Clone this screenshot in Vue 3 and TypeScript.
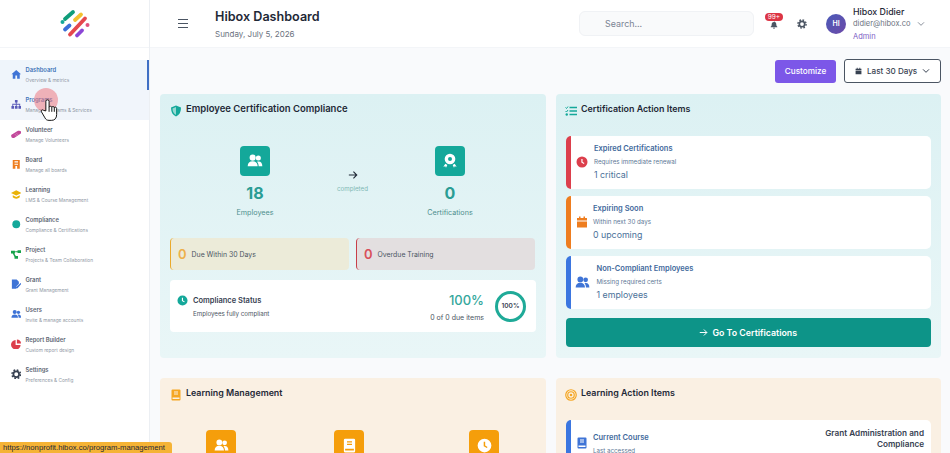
<script setup lang="ts">
interface NavItem {
  title: string
  sub: string
  icon: string
  tone: string
}

const navItems: NavItem[] = [
  { title: 'Dashboard', sub: 'Overview & metrics', icon: 'home', tone: 'blue' },
  { title: 'Programs', sub: 'Manage Programs & Services', icon: 'sitemap', tone: 'indigo' },
  { title: 'Volunteer', sub: 'Manage Volunteers', icon: 'hands', tone: 'pink' },
  { title: 'Board', sub: 'Manage all boards', icon: 'board', tone: 'orange' },
  { title: 'Learning', sub: 'LMS & Course Management', icon: 'cap', tone: 'yellow' },
  { title: 'Compliance', sub: 'Compliance & Certifications', icon: 'dot', tone: 'teal' },
  { title: 'Project', sub: 'Projects & Team Collaboration', icon: 'diagram', tone: 'green' },
  { title: 'Grant', sub: 'Grant Management', icon: 'file', tone: 'blue' },
  { title: 'Users', sub: 'Invite & manage accounts', icon: 'users', tone: 'blue' },
  { title: 'Report Builder', sub: 'Custom report design', icon: 'pie', tone: 'red' },
  { title: 'Settings', sub: 'Preferences & Config', icon: 'gear', tone: 'dark' }
]

const actionItems = [
  { title: 'Expired Certifications', sub: 'Requires immediate renewal', value: '1 critical', icon: 'clock', tone: 'red', gap: 'wide' },
  { title: 'Expiring Soon', sub: 'Within next 30 days', value: '0 upcoming', icon: 'calendar', tone: 'orange', gap: 'mid' },
  { title: 'Non-Compliant Employees', sub: 'Missing required certs', value: '1 employees', icon: 'users', tone: 'blue', gap: 'xwide' }
]
</script>

<template>
  <svg class="defs" xmlns="http://www.w3.org/2000/svg">
    <symbol id="home" viewBox="0 0 24 24"><path fill="currentColor" d="M12 2 1 12h3v10h6v-7h4v7h6V12h3z" /></symbol>
    <symbol id="sitemap" viewBox="0 0 24 24"><path fill="currentColor" d="M9 2h6v6h-2v3h8v5h2v6h-6v-6h2v-3h-6v3h2v6H9v-6h2v-3H5v3h2v6H1v-6h2v-5h8V8H9z" /></symbol>
    <symbol id="hands" viewBox="0 0 24 24"><path fill="currentColor" d="M1 13 14 5c4-2 8-1 9 1s0 5-3 6L8 20c-3 1-6 0-7-2s-1-4 0-5z" /><path fill="none" stroke="#fff" stroke-width="1.200" opacity=".5" d="m8 11 5 5M12 9l5 5" /></symbol>
    <symbol id="board" viewBox="0 0 24 24"><path fill="currentColor" fill-rule="evenodd" d="M4 2h16v20h-6v-6h-4v6H4zm4 3v3h8V5zm0 6v2h8v-2z" /></symbol>
    <symbol id="cap" viewBox="0 0 24 24"><path fill="currentColor" d="M12 3 0 9l12 6 12-6zM4 14v5c2 2 5 3 8 3s6-1 8-3v-5l-8 4z" /></symbol>
    <symbol id="dot" viewBox="0 0 24 24"><circle cx="12" cy="12" r="9" fill="currentColor" /></symbol>
    <symbol id="diagram" viewBox="0 0 24 24"><path fill="currentColor" d="M0 4h9v6H7.500l3.500 6h5v6h-8v-4L4 10H0zm15-1h9v6h-9V7.500H9.500v-2.500H15z" /></symbol>
    <symbol id="file" viewBox="0 0 24 24"><path fill="currentColor" d="M2 1h11l5 5v5l-6 6v5H2zM22 9l2 2-9 10h-3v-3z" /></symbol>
    <symbol id="users" viewBox="0 0 24 24"><circle cx="8.500" cy="7" r="4.600" fill="currentColor" /><circle cx="17" cy="7.600" r="3.800" fill="currentColor" /><path fill="currentColor" d="M1 20c0-5 3-7.500 7.500-7.500S16 15 16 20zM17.500 20c0-3-.8-5.300-2.400-7 .7-.3 1.500-.4 2.400-.4 3.500 0 5.500 2.400 5.500 7.400z" /></symbol>
    <symbol id="pie" viewBox="0 0 24 24"><path fill="currentColor" d="M10.500 2v11.500H22A11 11 0 1 1 10.500 2zM13.500 1a10 10 0 0 1 9.500 9.500h-9.500z" /></symbol>
    <symbol id="gear" viewBox="0 0 24 24"><circle cx="12" cy="12" r="6.500" fill="none" stroke="currentColor" stroke-width="4" /><circle cx="12" cy="12" r="9.800" fill="none" stroke="currentColor" stroke-width="3.400" stroke-dasharray="4 3.700" /></symbol>
    <symbol id="bell" viewBox="0 0 24 24"><path fill="currentColor" d="M12 1a2 2 0 0 1 2 2c4 1 5 4 5 8 0 3 1 5 3 6v2H2v-2c2-1 3-3 3-6 0-4 1-7 7-8a2 2 0 0 1 0-2zM9 20h6a3 3 0 0 1-6 0z" /></symbol>
    <symbol id="clock" viewBox="0 0 24 24"><path fill="currentColor" fill-rule="evenodd" d="M12 1a11 11 0 1 1 0 22 11 11 0 0 1 0-22zm-1.300 5v7l5 3 1.200-1.800-3.800-2.300V6z" /></symbol>
    <symbol id="calendar" viewBox="0 0 24 24"><path fill="currentColor" d="M6 1h3v3h6V1h3v3h4v5H2V4h4zM2 11h20v12H2z" /></symbol>
    <symbol id="shield" viewBox="0 0 24 24"><path fill="currentColor" d="M12 1 22 5c0 9-3 15-10 18C5 20 2 14 2 5z" /><path fill="#fff" opacity=".55" d="M12 4v16c-5-3-7-7-7-13z" /></symbol>
    <symbol id="tasks" viewBox="0 0 24 24"><path fill="none" stroke="currentColor" stroke-width="3" d="M9 5h15M9 12h15M9 19h15" /><path fill="none" stroke="currentColor" stroke-width="2" d="m1 5 2 2 3-4M1 12l2 2 3-4" /><circle cx="3.500" cy="19" r="2.400" fill="currentColor" /></symbol>
    <symbol id="award" viewBox="0 0 24 24"><path fill="currentColor" fill-rule="evenodd" d="M12 1a8 8 0 1 1 0 16 8 8 0 0 1 0-16zm0 5a3 3 0 1 0 0 6 3 3 0 0 0 0-6zM5 16l3 2-2 4-1-2-3 .5zM19 16l-3 2 2 4 1-2 3 .5z" /></symbol>
    <symbol id="book" viewBox="0 0 24 24"><path fill="currentColor" fill-rule="evenodd" d="M5 1h14a2 2 0 0 1 2 2v18a2 2 0 0 1-2 2H5a2 2 0 0 1-2-2V3a2 2 0 0 1 2-2zm3 4v2h8V5zm0 4v2h8V9zM5 17v3h14v-3z" /></symbol>
    <symbol id="target" viewBox="0 0 24 24"><circle cx="12" cy="12" r="10.500" fill="none" stroke="currentColor" stroke-width="2.400" /><circle cx="12" cy="12" r="6.500" fill="none" stroke="currentColor" stroke-width="2.400" /><circle cx="12" cy="12" r="2.600" fill="currentColor" /></symbol>
  </svg>

  <div class="app">
    <aside class="sidebar">
      <div class="logo">
        <svg width="32" height="32" viewBox="0 0 32 32">
          <g fill="none" stroke-linecap="round" stroke-width="3.800">
            <path stroke="#0f9d7a" d="M6 11 14 4" />
            <path stroke="#f2c230" d="M16 12 22 6.500" />
            <path stroke="#3b6fd8" d="M6 21.500 10.500 17.500" />
            <path stroke="#e5484d" d="M11 26.500 26 10.500" />
            <path stroke="#8b46d6" d="M18 27.500 23 22.500" />
          </g>
          <circle cx="3.500" cy="14" r="2" fill="#14a89a" />
          <circle cx="28.500" cy="17" r="2" fill="#e0527e" />
        </svg>
      </div>
      <nav class="nav">
        <a
          v-for="(item, i) in navItems"
          :key="item.title"
          class="nav-item"
          :class="{ active: i === 0, hovered: i === 1 }"
        >
          <svg class="nav-icon" :class="item.tone"><use :href="`#${item.icon}`" /></svg>
          <span class="nav-text">
            <span class="nav-title">{{ item.title }}</span>
            <span class="nav-sub">{{ item.sub }}</span>
          </span>
        </a>
      </nav>
    </aside>

    <div class="main">
      <header class="topbar">
        <button class="burger" aria-label="Menu"><i></i><i></i><i></i></button>
        <div class="heading">
          <h1>Hibox Dashboard</h1>
          <p>Sunday, July 5, 2026</p>
        </div>
        <div class="search">Search...</div>
        <div class="bell">
          <svg class="bell-icon"><use href="#bell" /></svg>
          <span class="badge">99+</span>
        </div>
        <svg class="top-gear"><use href="#gear" /></svg>
        <div class="avatar">HI</div>
        <div class="user">
          <strong>Hibox Didier</strong>
          <span>didier@hibox.co</span>
          <em>Admin</em>
        </div>
        <svg class="user-caret" viewBox="0 0 12 8"><path d="M1.500 1.500 6 6l4.500-4.500" /></svg>
      </header>

      <div class="content">
        <div class="toolbar">
          <button class="customize">Customize</button>
          <button class="range">
            <svg class="range-cal"><use href="#calendar" /></svg>
            <span>Last 30 Days</span>
            <svg class="range-caret" viewBox="0 0 12 8"><path d="M1.500 1.500 6 6l4.500-4.500" /></svg>
          </button>
        </div>

        <div class="grid">
          <section class="panel teal-panel">
            <h2 class="panel-title"><svg class="title-icon teal"><use href="#shield" /></svg>Employee Certification Compliance</h2>
            <div class="flow">
              <div class="flow-col">
                <div class="tile teal-bg"><svg><use href="#users" /></svg></div>
                <div class="flow-num">18</div>
                <div class="flow-label">Employees</div>
              </div>
              <div class="flow-mid">
                <svg class="flow-arrow" viewBox="0 0 12 12"><path d="M1 6h9.500M6.500 2l4 4-4 4" /></svg>
                <span>completed</span>
              </div>
              <div class="flow-col">
                <div class="tile teal-bg"><svg><use href="#award" /></svg></div>
                <div class="flow-num">0</div>
                <div class="flow-label">Certifications</div>
              </div>
            </div>
            <div class="stats">
              <div class="stat warn"><b>0</b><span>Due Within 30 Days</span></div>
              <div class="stat danger"><b>0</b><span>Overdue Training</span></div>
            </div>
            <div class="status">
              <svg class="status-icon teal"><use href="#clock" /></svg>
              <div class="status-text">
                <strong>Compliance Status</strong>
                <span>Employees fully compliant</span>
              </div>
              <div class="status-num">
                <b>100%</b>
                <span>0 of 0 due items</span>
              </div>
              <div class="ring">100%</div>
            </div>
          </section>

          <section class="panel teal-panel">
            <h2 class="panel-title small"><svg class="title-icon teal pull"><use href="#tasks" /></svg>Certification Action Items</h2>
            <div class="actions">
              <div v-for="a in actionItems" :key="a.title" class="action" :class="`bar-${a.tone}`">
                <svg class="action-icon" :class="[a.tone, a.gap]"><use :href="`#${a.icon}`" /></svg>
                <div class="action-text">
                  <strong>{{ a.title }}</strong>
                  <span>{{ a.sub }}</span>
                  <em>{{ a.value }}</em>
                </div>
              </div>
              <button class="go">
                <svg viewBox="0 0 12 12"><path d="M1 6h9.500M6.500 2l4 4-4 4" /></svg>
                Go To Certifications
              </button>
            </div>
          </section>

          <section class="panel amber-panel">
            <h2 class="panel-title small"><svg class="title-icon amber"><use href="#book" /></svg>Learning Management</h2>
            <div class="amber-tiles">
              <div class="tile amber-bg"><svg><use href="#users" /></svg></div>
              <div class="tile amber-bg"><svg><use href="#book" /></svg></div>
              <div class="tile amber-bg"><svg><use href="#clock" /></svg></div>
            </div>
          </section>

          <section class="panel amber-panel">
            <h2 class="panel-title small"><svg class="title-icon amber pull"><use href="#target" /></svg>Learning Action Items</h2>
            <div class="actions">
              <div class="action bar-blue course">
                <svg class="action-icon blue mid"><use href="#book" /></svg>
                <div class="action-text">
                  <strong>Current Course</strong>
                  <span>Last accessed</span>
                </div>
                <div class="course-name">Grant Administration and Compliance</div>
              </div>
            </div>
          </section>
        </div>
      </div>
    </div>

    <div class="click-dot"></div>
    <svg class="hand" viewBox="0 0 20 26">
      <path d="M6.500 14V3.500a1.800 1.800 0 0 1 3.600 0V10c0-1.500 3-1.500 3 0 0-1.200 2.800-1.200 2.800.4 0-1 2.600-.8 2.600.8V18c0 4-2 6.500-5.500 6.500H10c-2.500 0-3.500-1-4.500-2.800L1.600 15c-.9-1.700 1.300-3 2.500-1.500z" />
      <path d="M10.100 10v5M13.100 10v5M15.900 10.400V15" />
    </svg>
    <div class="status-link">https://nonprofit.hibox.co/program-management</div>
  </div>
</template>

<style scoped>
.defs { display: none; }
.app {
  position: relative;
  display: flex;
  width: 950px;
  height: 453px;
  overflow: hidden;
  font-family: Inter, "Liberation Sans", sans-serif;
  background: #f9fafc;
  color: #1f2937;
}
.blue { color: #3f74d6; }
.indigo { color: #5a5ab8; }
.pink { color: #c2479a; }
.orange { color: #ee7d1f; }
.yellow { color: #eab308; }
.teal { color: #14a89a; }
.green { color: #16a34a; }
.red { color: #dc3f4c; }
.dark { color: #374151; }
.amber { color: #f5a623; }

.sidebar {
  flex: 0 0 150px;
  background: #fff;
  border-right: 1px solid #eceff3;
  box-sizing: border-box;
}
.logo {
  display: flex;
  justify-content: center;
  align-items: center;
  height: 48px;
  border-bottom: 1px solid #f3f5f8;
  box-sizing: border-box;
}
.nav { margin-top: 12px; }
.nav-item {
  display: flex;
  align-items: center;
  gap: 4.500px;
  height: 30px;
  padding: 0 0 2px 10.500px;
  box-sizing: border-box;
}
.nav-item.active {
  background: #eff5fb;
  border-right: 2px solid #3f6fc4;
}
.nav-item.hovered { background: #f1f5fb; }
.nav-icon { width: 10.500px; height: 10.500px; flex: none; }
.nav-text { display: flex; flex-direction: column; gap: 3px; }
.nav-title { font-size: 5.800px; line-height: 8px; font-weight: 600; color: #5b6472; }
.nav-sub { font-size: 4.750px; line-height: 6px; color: #8f97a4; white-space: nowrap; }
.active .nav-title, .hovered .nav-title { color: #3f74b8; }

.main { flex: 1; display: flex; flex-direction: column; min-width: 0; }
.topbar {
  display: flex;
  align-items: center;
  height: 48px;
  flex: none;
  background: #fff;
  border-bottom: 1px solid #f3f5f8;
  box-sizing: border-box;
}
.burger {
  display: flex;
  flex-direction: column;
  gap: 2.500px;
  width: 10px;
  margin-left: 28px;
  padding: 0;
  border: 0;
  background: none;
}
.burger i { display: block; height: 1.500px; background: #4b5563; }
.heading { margin-left: 27px; width: 364px; padding-top: 1px; }
.heading h1 { margin: 0; font-size: 12.600px; line-height: 18px; font-weight: 600; color: #1f2937; }
.heading p { margin: 3px 0 0; font-size: 8px; line-height: 11px; color: #6b7280; }
.search {
  width: 175px;
  height: 25px;
  padding-left: 25px;
  box-sizing: border-box;
  background: #f9fafb;
  border: 1px solid #f0f2f5;
  border-radius: 6px;
  font-size: 8.900px;
  line-height: 23px;
  color: #7b8494;
}
.bell { position: relative; width: 18px; height: 24px; margin-left: 11px; }
.bell-icon { position: absolute; left: 5px; top: 9px; width: 8px; height: 8px; color: #4b5563; }
.badge {
  position: absolute;
  left: 0;
  top: 1px;
  width: 18px;
  height: 8px;
  background: #dc3545;
  border-radius: 5px;
  color: #fff;
  font-size: 6.500px;
  line-height: 8px;
  text-align: center;
}
.top-gear { width: 10px; height: 10px; margin-left: 14px; color: #4b5563; }
.avatar {
  width: 20px;
  height: 20px;
  margin-left: 20px;
  border-radius: 50%;
  background: linear-gradient(135deg, #4a5ab8, #6d4aa8);
  color: #fff;
  font-size: 7px;
  font-weight: 600;
  line-height: 20px;
  text-align: center;
  position: relative;
  left: -1px;
}
.user { display: flex; flex-direction: column; margin-left: 6px; width: 64px; white-space: nowrap; }
.user strong { font-size: 8.800px; line-height: 13px; font-weight: 500; color: #1f2937; }
.user span { font-size: 7.500px; line-height: 12px; color: #6b7280; }
.user em { font-size: 7.500px; line-height: 13px; font-style: normal; color: #7c5cc4; }
.user-caret { width: 8px; height: 6px; fill: none; stroke: #6b7280; stroke-width: 1.200; }

.content { flex: 1; padding: 11px 9px 0 10px; min-height: 0; }
.toolbar { display: flex; justify-content: flex-end; align-items: center; gap: 8px; height: 24px; }
.customize {
  width: 61px;
  height: 23px;
  padding: 0;
  border: 0;
  border-radius: 3px;
  background: #7c57e8;
  color: #fff;
  font: 500 8.200px Inter, sans-serif;
}
.range {
  display: flex;
  align-items: center;
  width: 97px;
  height: 24px;
  padding: 0 0 0 10px;
  box-sizing: border-box;
  background: #fff;
  border: 1px solid #4b5563;
  border-radius: 3px;
  color: #374151;
  font: 500 8.100px Inter, sans-serif;
}
.range-cal { width: 7px; height: 8px; margin-right: 5px; color: #374151; }
.range-caret { width: 8px; height: 6px; margin-left: 5px; fill: none; stroke: #374151; stroke-width: 1.500; }

.grid { display: grid; grid-template-columns: 386px 385px; column-gap: 10px; row-gap: 20px; margin-top: 11px; }
.panel { padding: 9px 10px 10px; border-radius: 4px; box-sizing: border-box; }
.teal-panel { height: 264px; background: linear-gradient(#dcf1f3, #e9f6f7); }
.amber-panel { height: 120px; background: #faf0e3; }
.panel-title {
  display: flex;
  align-items: center;
  gap: 4px;
  margin: 0;
  height: 12px;
  font-size: 9.500px;
  line-height: 12px;
  font-weight: 600;
  color: #1f2937;
}
.panel-title.small { font-size: 8.900px; }
.title-icon { width: 12px; height: 12px; flex: none; position: relative; top: 2px; }
.title-icon.pull { margin-left: -1px; }

.flow { display: grid; grid-template-columns: 100px 95px 100px; margin-top: 31px; padding-left: 35px; }
.flow-col { display: flex; flex-direction: column; align-items: center; }
.tile {
  display: flex;
  align-items: center;
  justify-content: center;
  width: 30px;
  height: 30px;
  border-radius: 4px;
  color: #fff;
}
.tile svg { width: 16px; height: 16px; }
.teal-bg { background: #14a89a; }
.amber-bg { background: #f59e0b; }
.flow-num { margin-top: 8px; font-size: 16px; line-height: 18px; font-weight: 700; color: #2a9d94; }
.flow-label { margin-top: 6px; font-size: 7.200px; line-height: 10px; color: #4e8f8d; }
.flow-mid { display: flex; flex-direction: column; align-items: center; margin-top: 24px; }
.flow-arrow { width: 10px; height: 10px; fill: none; stroke: #1f2937; stroke-width: 1.300; }
.flow-mid span { margin-top: 5px; font-size: 6.200px; line-height: 8px; color: #7fb8b4; }

.stats { display: grid; grid-template-columns: 179px 179px; gap: 7px; margin-top: 20px; }
.stat {
  display: flex;
  align-items: center;
  gap: 5px;
  height: 32px;
  padding-left: 7px;
  box-sizing: border-box;
  border-radius: 4px;
  font-size: 6.900px;
  color: #4b5563;
}
.stat b { font-size: 13px; font-weight: 600; }
.warn { background: #ecebd9; border-left: 1.500px solid #eaa92b; }
.warn b { color: #eeb04a; }
.danger { background: #e3dfe0; border-left: 1.500px solid #c7404a; }
.danger b { color: #d9505a; }

.status {
  display: flex;
  align-items: center;
  height: 52px;
  margin-top: 10px;
  padding: 0 10px 0 7px;
  box-sizing: border-box;
  background: #fff;
  border-radius: 4px;
}
.status-icon { width: 11px; height: 11px; flex: none; position: relative; top: -6px; }
.status-text { display: flex; flex-direction: column; gap: 3px; margin-left: 5px; flex: 1; }
.status-text strong { font-size: 7.500px; line-height: 11px; font-weight: 600; color: #374151; }
.status-text span { font-size: 6.200px; line-height: 9px; color: #4b5563; }
.status-num { display: flex; flex-direction: column; align-items: flex-end; position: relative; top: 1px; }
.status-num b { font-size: 13px; line-height: 17px; font-weight: 500; color: #34a79c; }
.status-num span { margin-top: 4px; font-size: 7px; line-height: 10px; color: #4b5563; }
.ring {
  width: 31px;
  height: 31px;
  margin-left: 11px;
  box-sizing: border-box;
  border: 3px solid #1faa98;
  border-radius: 50%;
  font-size: 6.500px;
  font-weight: 600;
  line-height: 25px;
  text-align: center;
  color: #374151;
}

.actions { display: flex; flex-direction: column; gap: 7.500px; margin-top: 21px; margin-left: -0.500px; }
.action {
  display: flex;
  align-items: center;
  height: 52.500px;
  padding-left: 5px;
  box-sizing: border-box;
  background: #fff;
  border-radius: 5px;
  border-left: 5px solid;
}
.bar-red { border-left-color: #dc3f4c; }
.bar-orange { border-left-color: #ee7d1f; }
.bar-blue { border-left-color: #3b76e0; }
.action-icon { width: 12px; height: 12px; flex: none; }
.action-icon.wide { margin-right: 6.500px; }
.action-icon.mid { margin-right: 5.500px; }
.action-icon.xwide { width: 15px; height: 15px; margin-right: 7px; margin-left: -1px; }
.action-text { display: flex; flex-direction: column; }
.action-text strong { font-size: 7.500px; line-height: 12px; font-weight: 600; color: #3f6a9c; }
.action-text span { margin-top: 2px; font-size: 6.200px; line-height: 10px; color: #5d7796; }
.action-text em { margin-top: 1px; font-size: 8.800px; line-height: 13px; font-style: normal; color: #4b7199; }
.go {
  display: flex;
  align-items: center;
  justify-content: center;
  gap: 4px;
  height: 29px;
  margin-top: 2px;
  padding: 0;
  border: 0;
  border-radius: 4px;
  background: #0d9488;
  color: #fff;
  font: 600 8.800px Inter, sans-serif;
}
.go svg { width: 9px; height: 9px; fill: none; stroke: #fff; stroke-width: 1.300; }

.amber-tiles { display: flex; margin: 31px 0 0 36px; }
.amber-tiles .tile:nth-child(2) { margin-left: 98px; }
.amber-tiles .tile:nth-child(3) { margin-left: 105px; }
.amber-tiles .tile svg { width: 15px; height: 15px; }

.course { position: relative; height: 70px; align-items: flex-start; padding-top: 12px; }
.course .action-icon { margin-top: 5px; }
.course-name {
  margin-left: auto;
  width: 110px;
  padding-right: 7px;
  text-align: right;
  font-size: 8.200px;
  line-height: 10.500px;
  font-weight: 600;
  color: #374151;
  position: relative;
  top: -4px;
}

.click-dot {
  position: absolute;
  left: 34px;
  top: 88px;
  width: 24px;
  height: 24px;
  border-radius: 50%;
  background: rgba(236, 120, 130, 0.55);
}
.hand {
  position: absolute;
  left: 40px;
  top: 98px;
  width: 18px;
  height: 24px;
  fill: #fff;
  stroke: #111;
  stroke-width: 1.100;
  stroke-linejoin: round;
}
.status-link {
  position: absolute;
  left: 0;
  bottom: 0;
  width: 172px;
  height: 11px;
  padding-left: 3px;
  box-sizing: border-box;
  background: #f5b335;
  border-top-right-radius: 3px;
  font-family: "Liberation Sans", sans-serif;
  font-size: 7.700px;
  line-height: 11px;
  white-space: nowrap;
  color: #1f2937;
}
</style>

<style>
html, body { margin: 0; overflow: hidden; }
</style>
